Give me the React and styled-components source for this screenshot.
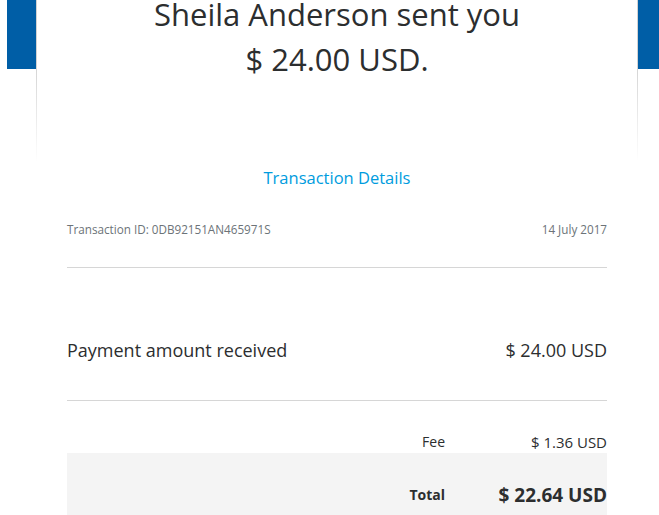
import React from "react"
import styled, { createGlobalStyle } from "styled-components"

const GlobalStyle = createGlobalStyle`
    html, body {
        margin: 0;
        padding: 0;
        background: #fff;
    }
    body {
        font-family: "Open Sans", "Noto Sans", Arial, sans-serif;
        color: #2c2e2f;
    }
`;

const Page = styled.div`
    width: 100%;
    min-height: 515px;
    overflow: hidden;
    background: linear-gradient(#005ea6, #005ea6) 7px 0 / calc(100% - 7px) 69px no-repeat;
`;

const Card = styled.div`
    box-sizing: border-box;
    width: 602px;
    margin-left: 36px;
    padding: 0 30px 0;
    border: solid transparent;
    border-width: 0 1px;
    background:
        linear-gradient(#fff, #fff) padding-box,
        linear-gradient(#d2d2d2 0, #d2d2d2 69px, #ffffff 170px) border-box;
`;

const Heading = styled.h1`
    margin: -8px 0 0;
    font-size: 31px;
    font-weight: 400;
    line-height: 45px;
    text-align: center;
    color: #2c2e2f;
`;

const SectionTitle = styled.div`
    margin-top: 84px;
    font-size: 16.5px;
    line-height: 24px;
    text-align: center;
    color: #009cde;
`;

const MetaRow = styled.div`
    display: flex;
    justify-content: space-between;
    margin-top: 31px;
    padding-bottom: 30px;
    border-bottom: 1px solid #d6d6d6;
    font-size: 11.7px;
    line-height: 16px;
    color: #6c7378;
`;

const AmountRow = styled.div`
    display: flex;
    justify-content: space-between;
    padding: 69px 0 37px;
    border-bottom: 1px solid #d6d6d6;
    font-size: 18px;
    line-height: 26px;
    color: #2c2e2f;
`;

const SummaryRow = styled.div`
    display: grid;
    grid-template-columns: 1fr 162px;
    margin-top: ${({ $top }) => $top};
    padding: ${({ $pad }) => $pad};
    background: ${({ $shaded }) => ($shaded ? "#f4f4f4" : "transparent")};
    color: #2c2e2f;
`;

const SummaryLabel = styled.div`
    text-align: right;
    font-size: 14px;
    line-height: ${({ $lh }) => $lh};
    font-weight: ${({ $bold }) => ($bold ? 700 : 400)};
`;

const SummaryValue = styled.div`
    text-align: right;
    font-size: ${({ $size }) => $size};
    line-height: ${({ $lh }) => $lh};
    font-weight: ${({ $bold }) => ($bold ? 700 : 400)};
`;

const App = () => {
    return (
        <>
            <GlobalStyle />
            <Page>
                <Card>
                    <Heading>
                        Sheila Anderson sent you
                        <br />
                        $ 24.00 USD.
                    </Heading>
                    <SectionTitle>Transaction Details</SectionTitle>
                    <MetaRow>
                        <span>Transaction ID: 0DB92151AN465971S</span>
                        <span>14 July 2017</span>
                    </MetaRow>
                    <AmountRow>
                        <span>Payment amount received</span>
                        <span>$ 24.00 USD</span>
                    </AmountRow>
                    <SummaryRow $top="31px" $pad="0">
                        <SummaryLabel $lh="20px">Fee</SummaryLabel>
                        <SummaryValue $size="15px" $lh="20px">$ 1.36 USD</SummaryValue>
                    </SummaryRow>
                    <SummaryRow $top="1px" $pad="28px 0 30px" $shaded>
                        <SummaryLabel $lh="28px" $bold>Total</SummaryLabel>
                        <SummaryValue $size="19px" $lh="28px" $bold>$ 22.64 USD</SummaryValue>
                    </SummaryRow>
                </Card>
            </Page>
        </>
    )
}

export default App
